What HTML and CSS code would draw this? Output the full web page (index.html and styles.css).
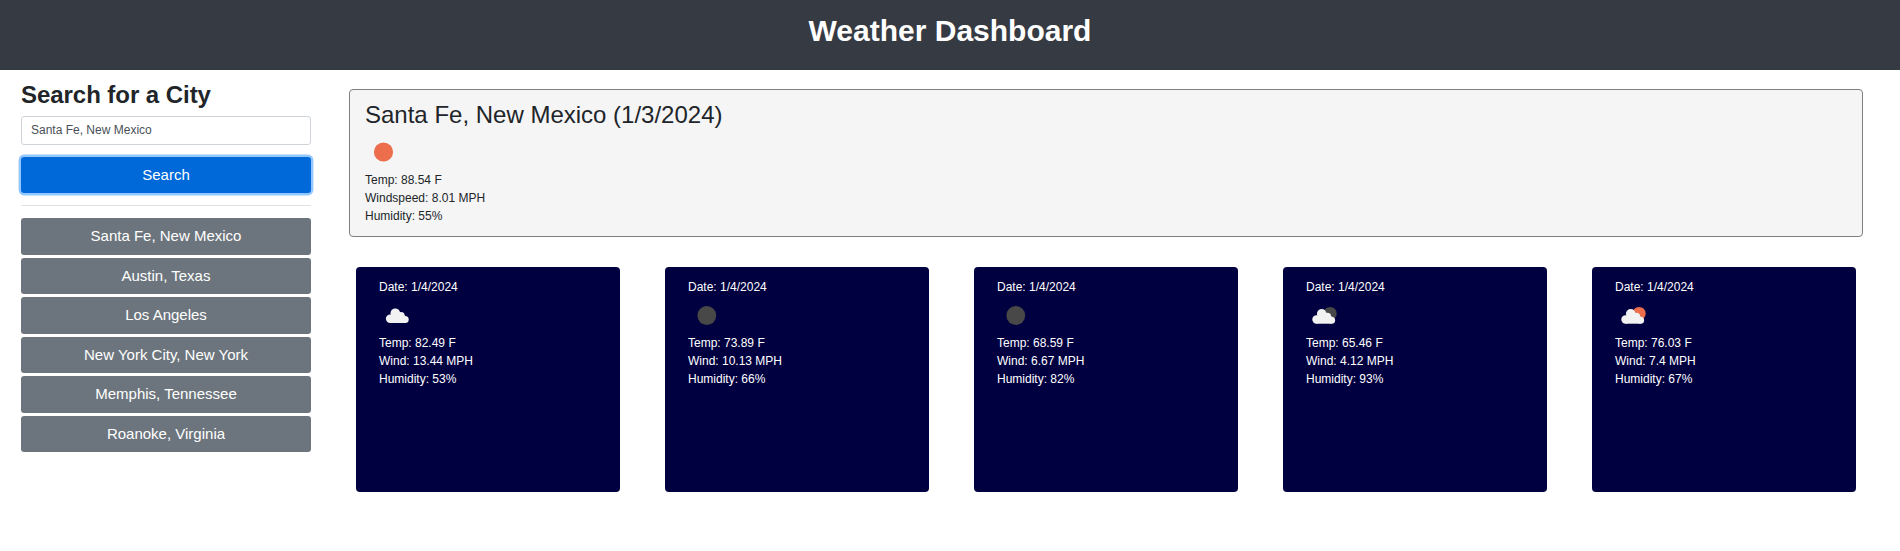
FILE: index.html
```html
<!DOCTYPE html>
<html lang="en">
<head>
<meta charset="utf-8">
<title>Weather Dashboard</title>
<link rel="stylesheet" href="styles.css">
</head>
<body>
<svg width="0" height="0" class="defs">
  <symbol id="cloud" viewBox="0 0 36 38">
    <circle cx="11.1" cy="22.8" r="4.2"/><circle cx="16.3" cy="17.2" r="4.8"/><circle cx="22" cy="19.7" r="3.7"/><circle cx="26.2" cy="23.5" r="3.5"/><rect x="11.2" y="19.5" width="15" height="7.5"/>
  </symbol>
</svg>
<header class="header"><h1>Weather Dashboard</h1></header>
<div class="layout">
  <aside class="sidebar">
    <h2>Search for a City</h2>
    <input class="city-input" type="text" value="Santa Fe, New Mexico">
    <button class="btn search">Search</button>
    <hr>
    <div class="history">
      <button class="btn">Santa Fe, New Mexico</button>
      <button class="btn">Austin, Texas</button>
      <button class="btn">Los Angeles</button>
      <button class="btn">New York City, New York</button>
      <button class="btn">Memphis, Tennessee</button>
      <button class="btn">Roanoke, Virginia</button>
    </div>
  </aside>
  <main class="main">
    <section class="current">
      <h3>Santa Fe, New Mexico (1/3/2024)</h3>
      <svg class="icon" viewBox="0 0 36 38"><circle class="sun" cx="18.5" cy="19" r="9.6"/></svg>
      <p>Temp: 88.54 F</p>
      <p>Windspeed: 8.01 MPH</p>
      <p>Humidity: 55%</p>
    </section>
    <section class="forecast">
      <article class="day">
        <p>Date: 1/4/2024</p>
        <svg class="icon" viewBox="0 0 36 38"><use class="cloud" href="#cloud" width="36" height="38"/></svg>
        <p>Temp: 82.49 F</p><p>Wind: 13.44 MPH</p><p>Humidity: 53%</p>
      </article>
      <article class="day">
        <p>Date: 1/4/2024</p>
        <svg class="icon" viewBox="0 0 36 38"><circle class="moon" cx="18.8" cy="19.5" r="9.4"/></svg>
        <p>Temp: 73.89 F</p><p>Wind: 10.13 MPH</p><p>Humidity: 66%</p>
      </article>
      <article class="day">
        <p>Date: 1/4/2024</p>
        <svg class="icon" viewBox="0 0 36 38"><circle class="moon" cx="18.8" cy="19.5" r="9.4"/></svg>
        <p>Temp: 68.59 F</p><p>Wind: 6.67 MPH</p><p>Humidity: 82%</p>
      </article>
      <article class="day">
        <p>Date: 1/4/2024</p>
        <svg class="icon" viewBox="0 0 36 38"><circle class="moon" cx="24.1" cy="17.5" r="6.6"/><use class="cloud" href="#cloud" x="-.6" y=".7" width="36" height="38"/></svg>
        <p>Temp: 65.46 F</p><p>Wind: 4.12 MPH</p><p>Humidity: 93%</p>
      </article>
      <article class="day">
        <p>Date: 1/4/2024</p>
        <svg class="icon" viewBox="0 0 36 38"><circle class="sun" cx="24.1" cy="17.5" r="6.6"/><use class="cloud" href="#cloud" x="-.6" y=".7" width="36" height="38"/></svg>
        <p>Temp: 76.03 F</p><p>Wind: 7.4 MPH</p><p>Humidity: 67%</p>
      </article>
    </section>
  </main>
</div>
</body>
</html>
```
FILE: styles.css
```css
* { box-sizing: border-box; }
body { margin: 0; background: #fff; color: #212529; font: 12px/18px "Liberation Sans", Arial, sans-serif; }
h1, h2, h3, p { margin: 0; }
.defs { display: none; }
.header { height: 70px; padding-top: 12px; background: #363a42; color: #fff; text-align: center; }
.header h1 { font-size: 30px; line-height: 38px; }
.layout { display: flex; align-items: flex-start; gap: 38px; padding: 0 37px 0 21px; }
.sidebar { width: 290px; padding-top: 10px; }
.sidebar h2 { font-size: 24px; line-height: 29px; margin-bottom: 7px; letter-spacing: -0.05px; }
.city-input { display: block; width: 100%; height: 29px; padding: 0 9px 2px; border: 1px solid #ced4da; border-radius: 3px; background: #fff; color: #495057; font: 12px "Liberation Sans", Arial, sans-serif; }
.btn { display: block; width: 100%; height: 36.5px; padding: 0 0 1px; border: 0; border-radius: 3.2px; background: #6c757d; color: #fff; font: 15px "Liberation Sans", Arial, sans-serif; }
.search { height: 36px; margin-top: 12px; padding-bottom: 2px; background: #0069d9; box-shadow: 0 0 0 2.4px rgba(38, 143, 255, .5); }
.sidebar hr { height: 1px; margin: 12px 0; border: 0; background: #e1e2e3; }
.history { display: flex; flex-direction: column; gap: 3px; }
.main { flex: 1; padding-top: 19px; }
.current { height: 148px; padding: 10px 15px; border: 1px solid #808080; border-radius: 4px; background: #f5f5f5; }
.current h3 { font-size: 24px; line-height: 29px; font-weight: 400; margin-bottom: 4px; }
.icon { display: block; width: 36px; height: 38px; }
.forecast { display: flex; justify-content: space-between; margin-top: 30px; padding: 0 7px; }
.day { width: 264px; height: 225px; padding: 11px 23px; border-radius: 4px; background: #000040; color: #fff; }
.sun { fill: #ec6e4c; }
.moon { fill: #484848; }
.cloud { fill: #f2f2f2; }
```
